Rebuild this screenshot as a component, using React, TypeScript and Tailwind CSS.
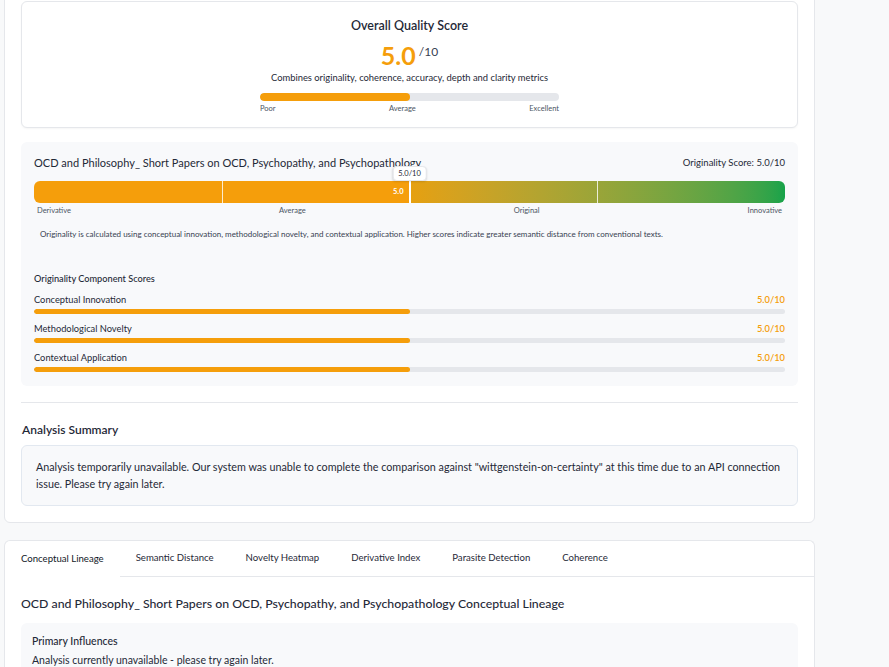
import React from "react";

const COMPONENTS = [
  { label: "Conceptual Innovation", score: 5.0 },
  { label: "Methodological Novelty", score: 5.0 },
  { label: "Contextual Application", score: 5.0 },
];

const TABS = [
  "Conceptual Lineage",
  "Semantic Distance",
  "Novelty Heatmap",
  "Derivative Index",
  "Parasite Detection",
  "Coherence",
];

const TITLE = "OCD and Philosophy_ Short Papers on OCD, Psychopathy, and Psychopathology";

function QualityCard() {
  return (
    <div className="rounded-md border border-[#e5e7eb] bg-white pt-[15px] pb-[13px] flex flex-col items-center shadow-[0_1px_2px_rgba(0,0,0,0.04)]">
      <h3 className="text-[12.5px] leading-[18px] font-semibold text-[#1f2937]">Overall Quality Score</h3>
      <div className="mt-[5px] flex items-start h-[30px]">
        <span className="text-[25px] leading-[30px] font-bold text-[#f59e0b]">5.0</span>
        <span className="ml-[3px] mt-[5px] text-[12px] leading-[14px] text-[#374151]">/10</span>
      </div>
      <p className="mt-[2px] text-[9.4px] leading-[12px] text-[#1f2937]">
        Combines originality, coherence, accuracy, depth and clarity metrics
      </p>
      <div className="mt-[9px] w-[299px]">
        <div className="h-[8px] rounded-full bg-[#e5e7eb] overflow-hidden">
          <div className="h-full w-1/2 rounded-full bg-[#f59e0b]" />
        </div>
        <div className="mt-[3px] flex justify-between text-[7.5px] leading-[10px] text-[#4b5563]">
          <span>Poor</span>
          <span>Average</span>
          <span>Excellent</span>
        </div>
      </div>
    </div>
  );
}

function OriginalityPanel() {
  return (
    <div className="mt-[14px] rounded-md bg-[#f8f9fb] px-[13px] pt-[14px] pb-[14px]">
      <div className="flex items-center justify-between">
        <span className="text-[11px] leading-[14px] text-[#1f2937]">{TITLE}</span>
        <span className="text-[9.5px] leading-[14px] text-[#1f2937]">Originality Score: 5.0/10</span>
      </div>

      {/* spectrum bar */}
      <div className="relative mt-[11px] h-[22px]">
        <div className="flex h-full rounded-md overflow-hidden">
          <div className="w-1/2 h-full bg-[#f59e0b] flex items-center justify-end pr-[6px]">
            <span className="text-[7.5px] font-bold text-white">5.0</span>
          </div>
          <div className="flex-1 h-full bg-gradient-to-r from-[#e6a00f] to-[#16a34a]" />
        </div>
        <div className="absolute top-0 bottom-0 left-1/4 w-px bg-white/80" />
        <div className="absolute top-0 bottom-0 left-3/4 w-px bg-white/80" />
        <div className="absolute top-[-2px] bottom-0 left-1/2 -ml-px w-[2px] bg-white" />
        <div className="absolute top-[-15px] left-1/2 -translate-x-1/2 rounded-[4px] border border-[#e5e7eb] bg-white px-[5px] py-px text-[7.5px] leading-[11px] text-[#1f2937] shadow-[0_1px_2px_rgba(0,0,0,0.12)]">
          5.0/10
        </div>
      </div>
      <div className="mt-[3px] flex justify-between px-[3px] text-[7.5px] leading-[10px] text-[#4b5563]">
        <span>Derivative</span>
        <span>Average</span>
        <span>Original</span>
        <span>Innovative</span>
      </div>

      <p className="mt-[13px] px-[6px] text-[8px] leading-[10px] text-[#374151]">
        Originality is calculated using conceptual innovation, methodological novelty, and contextual application. Higher scores indicate greater semantic distance from conventional texts.
      </p>

      <h4 className="mt-[34px] text-[9.2px] leading-[12px] font-medium text-[#1f2937]">Originality Component Scores</h4>
      <div className="mt-[9px] flex flex-col gap-[9px]">
        {COMPONENTS.map((c) => (
          <div key={c.label}>
            <div className="flex justify-between text-[9.3px] leading-[12px]">
              <span className="text-[#1f2937]">{c.label}</span>
              <span className="font-semibold text-[#f59e0b]">{c.score.toFixed(1)}/10</span>
            </div>
            <div className="mt-[3px] h-[5px] rounded-full bg-[#e5e7eb] overflow-hidden">
              <div className="h-full rounded-full bg-[#f59e0b]" style={{ width: `${c.score * 10}%` }} />
            </div>
          </div>
        ))}
      </div>
    </div>
  );
}

export default function App() {
  return (
    <div className="min-h-screen bg-[#f8f9fa] pl-[4px] font-['Lato','Liberation_Sans',sans-serif] overflow-hidden">
      <div className="w-[811px]">
        {/* Results card (scrolled, top cut off) */}
        <div className="-mt-[16px] rounded-md border border-[#e5e7eb] bg-white p-[16px]">
          <QualityCard />
          <OriginalityPanel />

          <div className="mt-[16px] h-px bg-[#e5e7eb]" />

          <h3 className="mt-[19px] pl-px text-[12px] leading-[16px] font-semibold text-[#1f2937]">Analysis Summary</h3>
          <div className="mt-[7px] rounded-md border border-[#e2e8f0] bg-[#f8f9fb] px-[14px] pt-[12px] pb-[13px] text-[10.75px] leading-[17px] text-[#1f2937]">
            Analysis temporarily unavailable. Our system was unable to complete the comparison against "wittgenstein-on-certainty" at this time due to an API connection issue. Please try again later.
          </div>
        </div>

        {/* Tabs card */}
        <div className="mt-[17px] rounded-t-md border border-b-0 border-[#e5e7eb] bg-white">
          <div className="flex h-[36px]">
            {TABS.map((t, i) => (
              <div
                key={t}
                className={
                  i === 0
                    ? "flex items-center px-[16px] text-[9.6px] text-[#111827]"
                    : "flex items-center px-[16px] text-[9.6px] text-[#1f2937] border-b border-[#e5e7eb]"
                }
              >
                {t}
              </div>
            ))}
            <div className="flex-1 border-b border-[#e5e7eb]" />
          </div>
          <div className="px-[16px] pt-[19px] pb-[20px]">
            <h3 className="text-[12.3px] leading-[16px] font-medium text-[#1f2937]">{TITLE} Conceptual Lineage</h3>
            <div className="mt-[11px] rounded-md bg-[#f8f9fb] px-[11px] pt-[11px] pb-[12px]">
              <h4 className="text-[10.5px] leading-[14px] font-medium text-[#1f2937]">Primary Influences</h4>
              <p className="mt-[5px] text-[10.5px] leading-[14px] text-[#1f2937]">Analysis currently unavailable - please try again later.</p>
            </div>
          </div>
        </div>
      </div>
    </div>
  );
}
